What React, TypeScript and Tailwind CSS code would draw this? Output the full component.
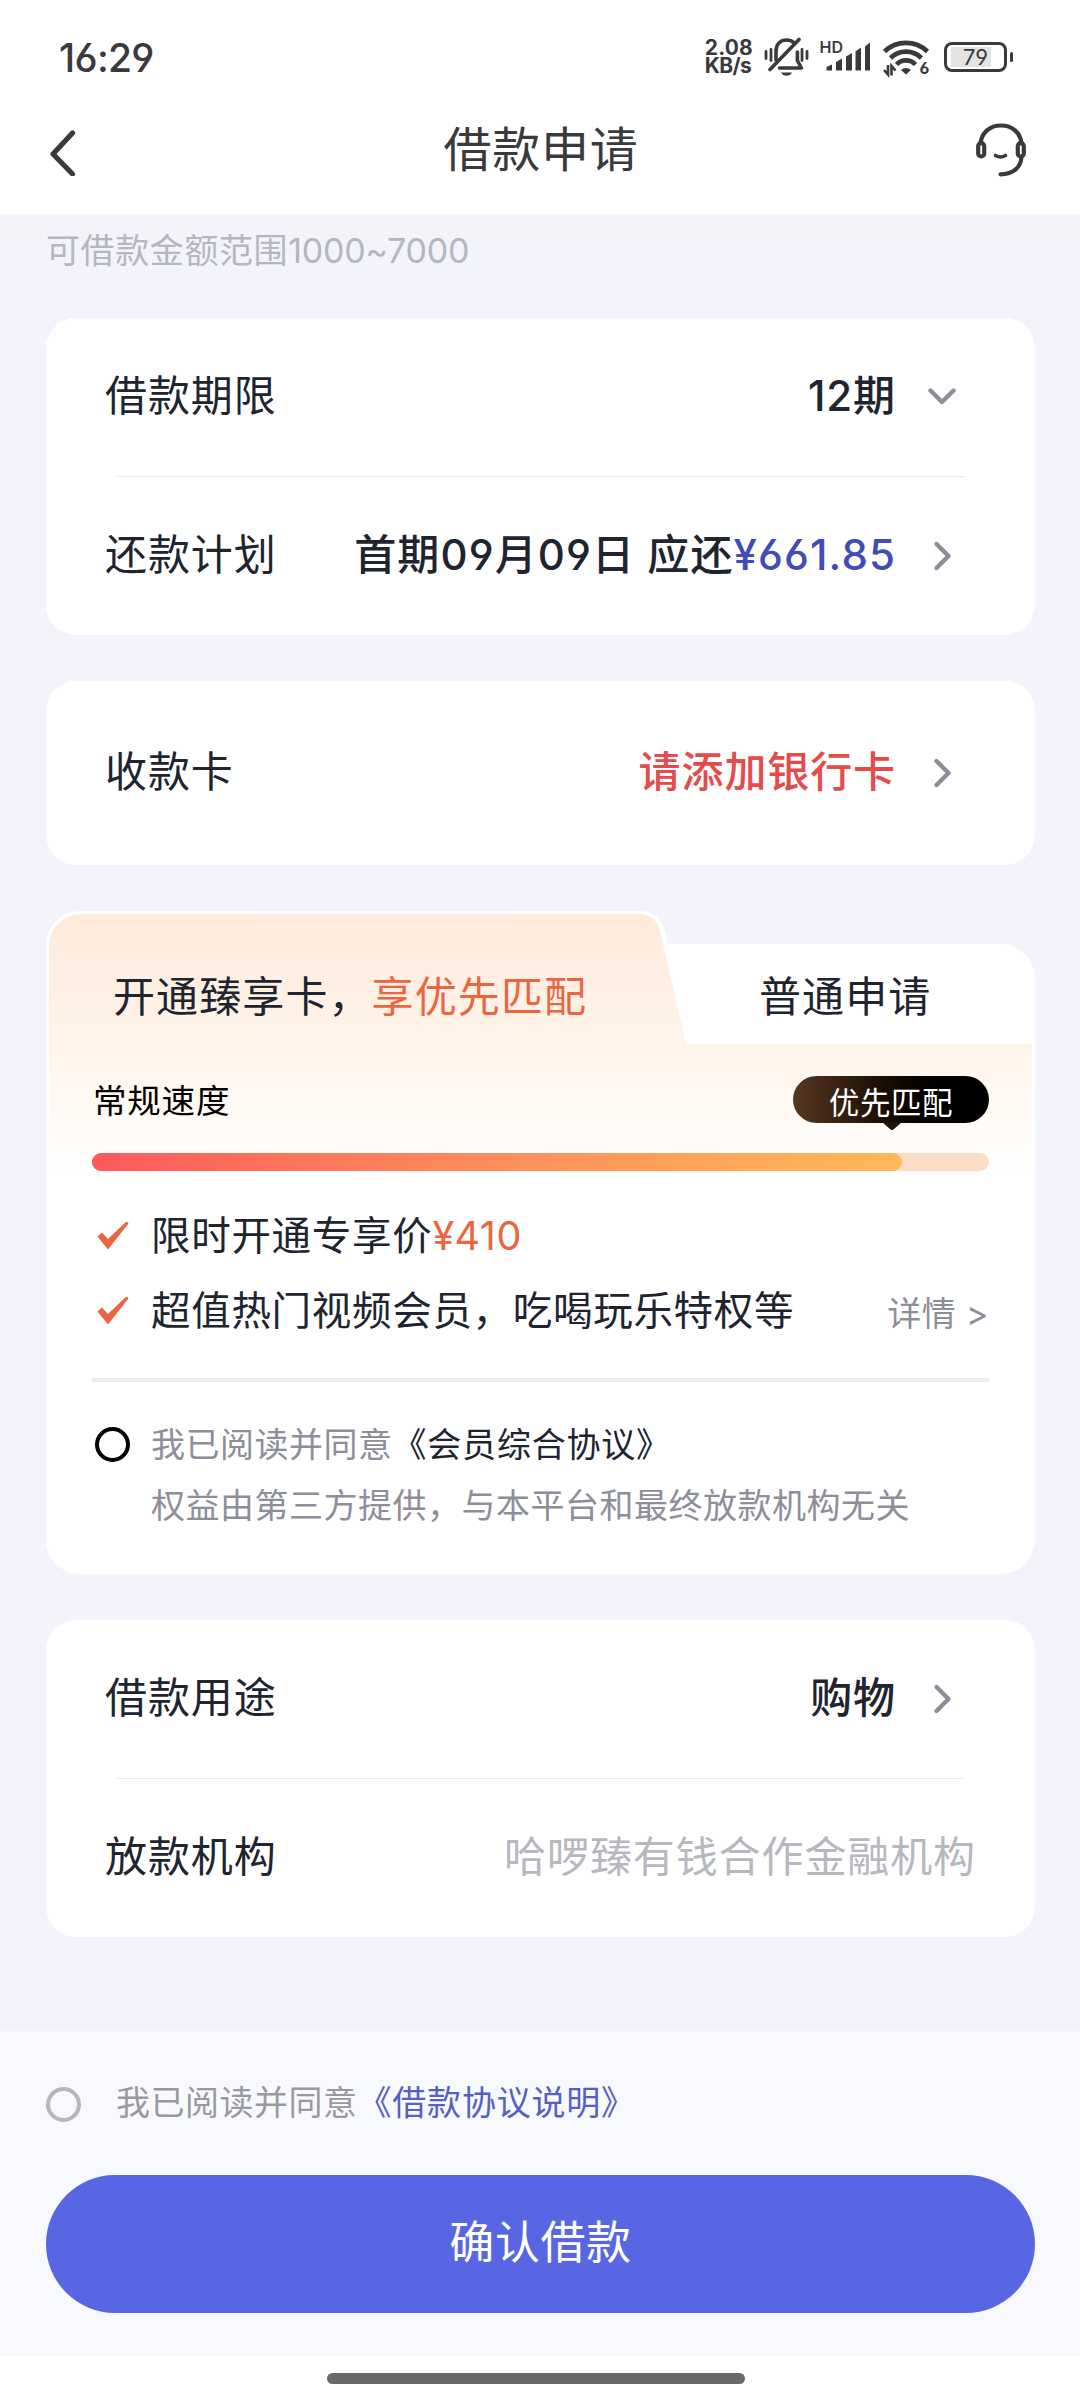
import { FC, ReactNode, useState } from "react";

const Chevron: FC<{ down?: boolean }> = ({ down }) => (
  <svg width="28" height="32" viewBox="0 0 28 32" fill="none" stroke="#8d8e99" strokeWidth="4.4" strokeLinecap="round" strokeLinejoin="round">
    {down ? <path d="M2.5 9.5 14 21 25.5 9.5" /> : <path d="M8.5 4 20.5 16 8.5 28" />}
  </svg>
);

const Row: FC<{ label: string; arrow?: "down" | "right"; children: ReactNode }> = ({ label, arrow, children }) => (
  <div className="flex h-[158px] items-center pr-[59px] pb-[2px] pl-[59px] text-[42px] leading-none tracking-[0.9px] text-[#20242f]">
    <span className="flex-1">{label}</span>
    {children}
    {arrow && (
      <span className="mt-px ml-[32px] mr-[20px]">
        <Chevron down={arrow === "down"} />
      </span>
    )}
  </div>
);

const Divider = () => <div className="mx-[71px] h-px bg-[#e6e7ea]" />;

const Check = () => (
  <svg width="32" height="30" viewBox="0 0 32 30" fill="none">
    <path d="M0.5 15.5 5 11.500 11 18 28.500 1.200Q30.500 0 31.500 2.500L11 28.500Z" fill="#ea6540" />
  </svg>
);

const StatusBar = () => (
  <div className="flex h-[114px] items-center pl-[59px] pr-[67px] text-[#3a3a3c]">
    <span className="flex-1 text-[39px] leading-none font-medium tracking-[-0.7px]">16:29</span>
    <div className="mr-[11px] flex flex-col text-[21px] leading-[18px] font-bold">
      <span className="tracking-[0.2px]">2.08</span>
      <span className="tracking-[-0.6px]">KB/s</span>
    </div>
    <svg className="mr-[11px]" width="45" height="40" viewBox="0 0 45 40" fill="none" stroke="currentColor" strokeWidth="3.6" strokeLinecap="round" strokeLinejoin="round">
      <path d="M12 23V14.5C12 7 16.5 3 22.5 3c3 0 5.6 1 7.4 2.8" />
      <path d="M33.4 15v8.5l4 7.5H15.5" />
      <path d="M35 2.5 6 32.5" />
      <path d="M17 35.5h11c-1.5 2.8-3.5 3.2-5.5 3.2s-4-0.4-5.5-3.2z" fill="currentColor" stroke="none" />
      <path d="M2 14.5v7M7 12.5v11M38 12.5v11M43 14.5v7" strokeWidth="2.8" />
    </svg>
    <svg className="mr-[11px] overflow-visible" width="52" height="38" viewBox="0 0 52 38" fill="currentColor">
      <text x="-0.5" y="14.5" fontSize="16" fontWeight="600">HD</text>
      <path d="M6.500 29 12 26.500v6H6.500zM16 24l6-3.500v12h-6zM26 18.500l6-3.500v17.500h-6zM35.500 13.500l5.500-4v23h-5.500zM45 8.500l5-4v28h-5z" />
    </svg>
    <svg className="mr-[14px] overflow-visible" width="47" height="38" viewBox="0 0 47 38" fill="none" stroke="currentColor" strokeWidth="4.6">
      <path d="M1.5 13.5a31 31 0 0 1 43 0" />
      <path d="M7.5 20a22 22 0 0 1 31 0" />
      <path d="M13.5 26.5a13 13 0 0 1 19 0" />
      <path d="M18 32a7 7 0 0 1 10 0l-5 4.5z" fill="currentColor" stroke="none" />
      <path d="M5 27v9.500L1 32M8.500 37.500V28l4 4.500" strokeWidth="2.6" />
      <text x="36.5" y="36" fontSize="16" fontWeight="700" fill="currentColor" stroke="none">6</text>
    </svg>
    <div className="flex h-[30px] w-[63px] items-center justify-center rounded-[8px] border-3 border-current bg-[linear-gradient(#e3e3e3,#e3e3e3)] bg-[length:40px_20px] bg-[position:4px_2px] bg-no-repeat text-[22px] leading-none">
      79
    </div>
    <div className="ml-[3px] h-[10px] w-[3px] rounded-[2px] bg-current" />
  </div>
);

const TitleBar = () => (
  <header className="flex h-[100px] items-center justify-between pr-[53px] pl-[49px] text-[#3a3a3c]">
    <svg className="mt-[-26px]" width="52" height="50" viewBox="0 0 52 50" fill="none" stroke="currentColor" strokeWidth="5.2" strokeLinecap="round" strokeLinejoin="round">
      <path d="M23.5 7 4 28 23.5 48" />
    </svg>
    <h1 className="mt-[-28px] ml-[6px] text-[48px] leading-none tracking-[0.8px]">借款申请</h1>
    <svg className="mt-[-28px]" width="52" height="56" viewBox="0 0 52 56" fill="none" stroke="currentColor" strokeWidth="4.2" strokeLinecap="round">
      <path d="M5.5 21.5C6.5 10.5 15 3.5 26 3.5s19.5 7 20.5 18" />
      <rect x="3.2" y="21" width="6" height="13.5" rx="3" />
      <rect x="42.8" y="21" width="6" height="13.5" rx="3" />
      <path d="M46.5 35C46 45 38.5 52 25.5 52.3" />
      <path d="M20.5 33.5q5 3 10 0" strokeWidth="3.6" />
    </svg>
  </header>
);

const MemberCard: FC<{ agreed: boolean; onToggle: () => void }> = ({ agreed, onToggle }) => (
  <section className="relative mt-[46px] h-[663px]">
    <div className="absolute inset-x-0 top-[33px] bottom-0 rounded-[34px] bg-white" />
    {/* slanted tab backdrop */}
    <svg className="absolute top-0 left-0" width="989" height="265" viewBox="0 0 989 265" fill="none">
      <defs>
        <linearGradient id="tab" x1="0" y1="0" x2="0" y2="1">
          <stop offset="0" stopColor="#ffeadb" />
          <stop offset="0.5" stopColor="#fff4ea" />
          <stop offset="1" stopColor="#ffffff" />
        </linearGradient>
      </defs>
      <path d="M0 265V34A34 34 0 0 1 34 0H594C607 0 615 7 619 20L643 132V265Z" fill="#fff" />
      <path d="M3 265V35A32 32 0 0 1 35 3H592C604 3 611 9 614 20L640 133H986V265Z" fill="url(#tab)" />
    </svg>

    <div className="relative flex h-full flex-col px-[46px]">
      <div className="flex h-[173px] items-center pb-[2px] text-[42px] leading-none tracking-[1.1px] text-[#20242f]">
        <span className="ml-[21px] w-[646px]">
          开通臻享卡，<span className="text-[#eb6541]">享优先匹配</span>
        </span>
        <span>普通申请</span>
      </div>

      <div className="flex h-[69px] items-start justify-between">
        <span className="mt-px ml-px text-[33.5px] leading-none tracking-[0.8px] text-black">常规速度</span>
        <div className="relative mt-[-8px] flex h-[47px] w-[196px] items-center justify-center rounded-full bg-linear-to-r from-[#57371f] to-black to-90% pt-[7px] text-[30.5px] leading-none tracking-[0.6px] text-white">
          优先匹配
          <svg className="absolute top-[46px] left-[89px]" width="20" height="9" viewBox="0 0 20 9">
            <path d="M0 0H20L12 7Q10 9 8 7Z" fill="#1f140c" />
          </svg>
        </div>
      </div>

      <div className="h-[18px] rounded-full bg-[#fbdcc9]">
        <div className="h-full w-[810px] rounded-full bg-linear-to-r from-[#ff585b] to-[#feba59]" />
      </div>

      <div className="mt-[43px] flex h-[44px] items-center text-[39.5px] leading-none tracking-[0.7px] text-[#20242f]">
        <span className="mr-[22px] ml-[5px]"><Check /></span>
        <span className="mt-[2px]">
          限时开通专享价<span className="tracking-[0.5px] text-[#ea6540]">¥410</span>
        </span>
      </div>
      <div className="mt-[31px] flex h-[44px] items-center text-[39.5px] leading-none tracking-[0.7px] text-[#20242f]">
        <span className="mr-[22px] ml-[5px]"><Check /></span>
        <span className="mt-[2px] flex-1">超值热门视频会员，吃喝玩乐特权等</span>
        <span className="mt-[6px] text-[34px] tracking-[0.4px] text-[#8d8e99]">详情 &gt;</span>
      </div>

      <div className="mt-[45px] h-[4px] bg-[#ececec]" />

      <div className="mt-[46px] flex text-[34px] leading-none tracking-[0.5px] text-[#8d8e99]">
        <button
          className={`mt-[-1px] mr-[21px] ml-[3px] h-[35px] w-[35px] rounded-full border-4 border-black ${agreed ? "bg-black" : ""}`}
          onClick={onToggle}
        />
        <div>
          <p>
            我已阅读并同意<span className="text-[#20242f] tracking-[0.8px]">《会员综合协议》</span>
          </p>
          <p className="mt-[27px]">权益由第三方提供，与本平台和最终放款机构无关</p>
        </div>
      </div>
    </div>
  </section>
);

const App = () => {
  const [memberAgreed, setMemberAgreed] = useState(false);
  const [loanAgreed, setLoanAgreed] = useState(false);

  return (
    <div className="flex h-[2400px] w-[1080px] flex-col overflow-hidden bg-[#f3f3fb] font-['Inter','Noto_Sans_CJK_SC',sans-serif] [font-feature-settings:'cv03','cv04']">
      <div className="bg-white">
        <StatusBar />
        <TitleBar />
      </div>

      <main className="flex-1 bg-linear-to-b from-[#f3f3f8] to-[#f3f3fb] to-2% pr-[45px] pl-[46px]">
        <p className="h-[104px] pt-[20px] text-[34px] leading-none tracking-[0.6px] text-[#b5b6bf]">
          可借款金额范围<span className="tracking-[-0.2px]">1000~7000</span>
        </p>

        <section className="rounded-[30px] bg-white">
          <Row label="借款期限" arrow="down">
            <span className="font-medium">12期</span>
          </Row>
          <Divider />
          <Row label="还款计划" arrow="right">
            <span className="font-medium tracking-[1.1px]">
              首期09月09日 应还<span className="text-[#424cb8]">¥661.85</span>
            </span>
          </Row>
        </section>

        <section className="mt-[46px] rounded-[30px] bg-white py-[13px]">
          <Row label="收款卡" arrow="right">
            <span className="font-medium text-[#e54b4b]">请添加银行卡</span>
          </Row>
        </section>

        <MemberCard agreed={memberAgreed} onToggle={() => setMemberAgreed(!memberAgreed)} />

        <section className="mt-[46px] rounded-[30px] bg-white">
          <Row label="借款用途" arrow="right">
            <span className="font-medium">购物</span>
          </Row>
          <Divider />
          <Row label="放款机构">
            <span className="text-[#b7b8bf]">哈啰臻有钱合作金融机构</span>
          </Row>
        </section>
      </main>

      <footer className="h-[325px] bg-[#f8f9fe] pr-[45px] pl-[46px]">
        <div className="flex h-[144px] items-center text-[34px] leading-none tracking-[0.5px] text-[#9a9a9e]">
          <button
            className={`mt-[2px] mr-[35px] h-[35px] w-[35px] rounded-full border-4 border-[#b6b7bd] ${loanAgreed ? "bg-[#5866e4]" : ""}`}
            onClick={() => setLoanAgreed(!loanAgreed)}
          />
          <span>
            我已阅读并同意<span className="text-[#5560c4] tracking-[0.8px]">《借款协议说明》</span>
          </span>
        </div>
        <button className="flex h-[138px] w-full items-center justify-center rounded-full bg-[#5866e4] pb-[3px] text-[45px] leading-none tracking-[0.6px] text-white">
          确认借款
        </button>
      </footer>

      <div className="h-[44px] bg-white pt-[17px]">
        <div className="ml-[327px] h-[11px] w-[418px] rounded-full bg-[#696969]" />
      </div>
    </div>
  );
};

export default App;
